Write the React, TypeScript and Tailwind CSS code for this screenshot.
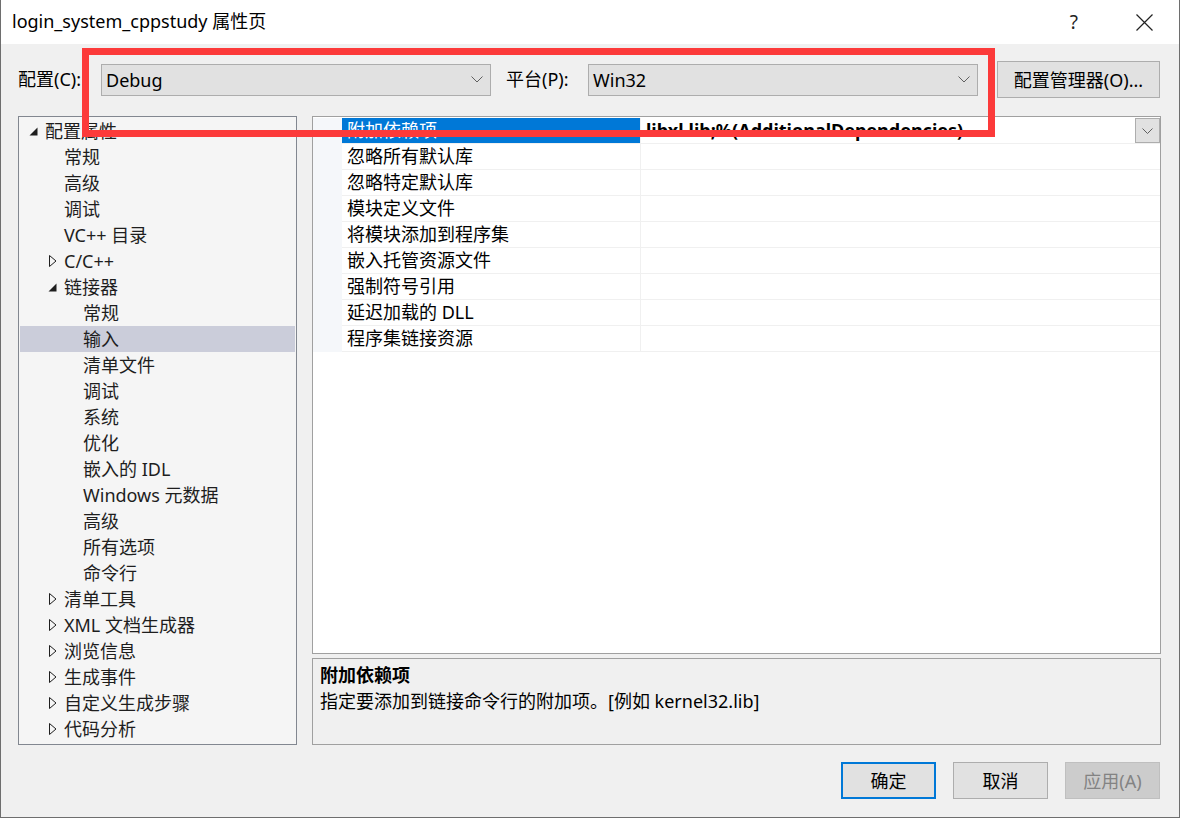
import { FC } from "react";

type TreeItem = {
  label: string;
  level: number;
  exp?: "open" | "closed";
  selected?: boolean;
};

const tree: TreeItem[] = [
  { label: "配置属性", level: 0, exp: "open" },
  { label: "常规", level: 1 },
  { label: "高级", level: 1 },
  { label: "调试", level: 1 },
  { label: "VC++ 目录", level: 1 },
  { label: "C/C++", level: 1, exp: "closed" },
  { label: "链接器", level: 1, exp: "open" },
  { label: "常规", level: 2 },
  { label: "输入", level: 2, selected: true },
  { label: "清单文件", level: 2 },
  { label: "调试", level: 2 },
  { label: "系统", level: 2 },
  { label: "优化", level: 2 },
  { label: "嵌入的 IDL", level: 2 },
  { label: "Windows 元数据", level: 2 },
  { label: "高级", level: 2 },
  { label: "所有选项", level: 2 },
  { label: "命令行", level: 2 },
  { label: "清单工具", level: 1, exp: "closed" },
  { label: "XML 文档生成器", level: 1, exp: "closed" },
  { label: "浏览信息", level: 1, exp: "closed" },
  { label: "生成事件", level: 1, exp: "closed" },
  { label: "自定义生成步骤", level: 1, exp: "closed" },
  { label: "代码分析", level: 1, exp: "closed" },
];

const props = [
  "附加依赖项",
  "忽略所有默认库",
  "忽略特定默认库",
  "模块定义文件",
  "将模块添加到程序集",
  "嵌入托管资源文件",
  "强制符号引用",
  "延迟加载的 DLL",
  "程序集链接资源",
];

const Chevron: FC = () => (
  <svg width="12" height="7" viewBox="0 0 12 7" fill="none">
    <path d="M0.5 0.5 L6 6 L11.5 0.5" stroke="#5f5f5f" strokeWidth="1" />
  </svg>
);

const Expander: FC<{ kind?: "open" | "closed" }> = ({ kind }) => {
  if (kind === "open")
    return (
      <svg width="9" height="9" viewBox="0 0 9 9">
        <path d="M8.5 0.5 L8.5 8.5 L0.5 8.5 Z" fill="#1e1e1e" />
      </svg>
    );
  if (kind === "closed")
    return (
      <svg width="8" height="12" viewBox="0 0 8 12" fill="none">
        <path d="M0.5 0.5 L7 6 L0.5 11.5 Z" stroke="#1e1e1e" strokeWidth="1" />
      </svg>
    );
  return null;
};

const Combo: FC<{ value: string }> = ({ value }) => (
  <div className="w-[390px] h-[32px] bg-[#e1e1e1] border border-[#adadad] flex items-center justify-between pl-[4px] pr-[7px]">
    <span className="leading-[30px]">{value}</span>
    <Chevron />
  </div>
);

const App: FC = () => {
  return (
    <div
      className="relative w-[1180px] h-[818px] bg-[#f0f0f0] border-l border-r border-b border-[#6e6e6e] text-[18px] text-black flex flex-col overflow-hidden"
      style={{ fontFamily: '"Noto Sans", "Noto Sans CJK SC", sans-serif' }}
    >
      {/* title bar */}
      <div className="h-[44px] bg-white flex items-center shrink-0">
        <span className="ml-[11px] leading-[44px] pb-[2px]">login_system_cppstudy 属性页</span>
        <div className="flex-1" />
        <span className="mr-[58px] text-[19px] leading-none text-[#222]">?</span>
        <svg className="mr-[26px]" width="17" height="17" viewBox="0 0 17 17">
          <path d="M0.5 0.5 L16.5 16.5 M16.5 0.5 L0.5 16.5" stroke="#222" strokeWidth="1.2" />
        </svg>
      </div>

      {/* config row */}
      <div className="mt-[17px] h-[37px] flex items-center shrink-0">
        <span className="ml-[17px] w-[83px]">配置(C):</span>
        <Combo value="Debug" />
        <span className="ml-[15px] w-[82px]">平台(P):</span>
        <Combo value="Win32" />
        <button className="ml-[19px] w-[163px] h-[37px] bg-[#e1e1e1] border border-[#adadad] leading-none">
          配置管理器(O)...
        </button>
      </div>

      {/* main area */}
      <div className="mt-[18px] h-[629px] flex shrink-0">
        {/* tree */}
        <div className="ml-[17px] w-[279px] h-full bg-[#f5f5f5] border border-[#828790] p-px">
          {tree.map((t, i) => (
            <div
              key={i}
              className={
                "h-[26px] flex items-center whitespace-nowrap " +
                (t.selected ? "bg-[#cbcdda]" : "")
              }
            >
              <div
                className={
                  "w-[21px] h-[26px] flex items-center shrink-0 " +
                  (t.exp === "closed" ? "pl-[6px]" : "pl-[5px]")
                }
                style={{ marginLeft: 4 + t.level * 19 }}
              >
                <Expander kind={t.exp} />
              </div>
              <span className="leading-[26px] text-[#1e1e1e]">{t.label}</span>
            </div>
          ))}
        </div>

        {/* right column */}
        <div className="ml-[15px] w-[849px] h-full flex flex-col">
          <div className="h-[538px] bg-white border border-[#a0a0a0] pt-px">
            {props.map((p, i) => (
              <div key={i} className="h-[26px] flex">
                <div className="w-[29px] bg-[#f5f7fa]" />
                <div className="flex-1 flex border-b border-[#f0f0f0]">
                  <div
                    className={
                      "w-[299px] h-[25px] pl-[5px] leading-[25px] whitespace-nowrap border-r border-[#f0f0f0] " +
                      (i === 0 ? "bg-[#0078d7] text-white" : "")
                    }
                  >
                    {p}
                  </div>
                  <div className="flex-1 h-[25px] flex items-center justify-between">
                    {i === 0 && (
                      <>
                        <span className="pl-[5px] font-bold leading-[25px] whitespace-nowrap">
                          libxl.lib;%(AdditionalDependencies)
                        </span>
                        <div className="w-[25px] h-[25px] bg-[#e1e1e1] border border-[#adadad] flex items-center justify-center">
                          <svg width="11" height="6" viewBox="0 0 11 6" fill="none">
                            <path d="M0.5 0.5 L5.5 5.5 L10.5 0.5" stroke="#5f5f5f" strokeWidth="1" />
                          </svg>
                        </div>
                      </>
                    )}
                  </div>
                </div>
              </div>
            ))}
          </div>
          <div className="mt-[4px] flex-1 border border-[#a0a0a0] bg-[#f0f0f0] pl-[7px] pt-[3px]">
            <div className="font-bold leading-[26px]">附加依赖项</div>
            <div className="leading-[26px]">指定要添加到链接命令行的附加项。[例如 kernel32.lib]</div>
          </div>
        </div>
      </div>

      {/* buttons */}
      <div className="mt-[17px] flex justify-end pr-[19px] gap-[17px] shrink-0">
        <button className="w-[95px] h-[37px] bg-[#e1e1e1] border-2 border-[#0078d7] leading-none">
          确定
        </button>
        <button className="w-[95px] h-[37px] bg-[#e1e1e1] border border-[#adadad] leading-none">
          取消
        </button>
        <button className="w-[95px] h-[37px] bg-[#cccccc] border border-[#bfbfbf] text-[#838383] leading-none">
          应用(A)
        </button>
      </div>

      {/* red annotation */}
      <div className="absolute left-[81px] top-[48px] w-[913px] h-[89px] border-[7px] border-[#fc3a3a] pointer-events-none" />
    </div>
  );
};

export default App;
